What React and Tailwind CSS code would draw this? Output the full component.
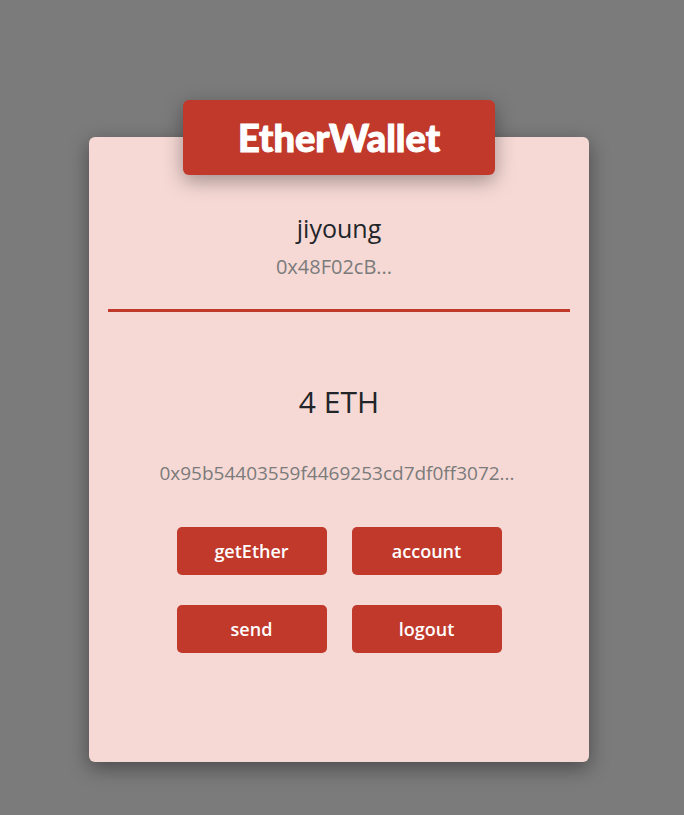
const actions = ['getEther', 'account', 'send', 'logout'];

export default function App() {
  return (
    <main className="min-h-screen bg-[#7b7b7b] pt-[100px] pr-[95px] pb-[53px] pl-[89px] font-['Open_Sans','Noto_Sans',sans-serif] text-[#212529]">
      <section className="mt-[37px] flex flex-col items-center rounded-md bg-[#f6d9d5] px-[19px] pb-[109px] shadow-[0_6px_20px_rgba(0,0,0,0.4)]">
        <h1 className="-mt-[37px] w-full max-w-[312px] rounded-md bg-[#c0392b] text-center font-['Lato',sans-serif] text-[38px] leading-[75px] font-black text-white shadow-[0_6px_20px_rgba(0,0,0,0.35)] [-webkit-text-stroke:1px_white]">
          EtherWallet
        </h1>
        <h2 className="mt-9 text-[25px] leading-[34px]">jiyoung</h2>
        <p className="mt-2 pr-[10px] text-[20px] leading-7 text-[#7b7b7b]">0x48F02cB...</p>
        <hr className="mt-[28px] w-full border-t-[3px] border-[#c0392b]" />
        <p className="mt-[70px] text-[30px] leading-10">4 ETH</p>
        <p className="mt-[37px] pr-1 text-[19px] leading-7 text-[#7b7b7b]">0x95b54403559f4469253cd7df0ff3072...</p>
        <div className="mt-10 grid w-full max-w-[325px] grid-cols-2 gap-x-[25px] gap-y-[30px]">
          {actions.map((action) => (
            <button key={action} type="button" className="h-12 rounded-[5px] bg-[#c0392b] text-[18px] font-semibold text-white">
              {action}
            </button>
          ))}
        </div>
      </section>
    </main>
  );
}
